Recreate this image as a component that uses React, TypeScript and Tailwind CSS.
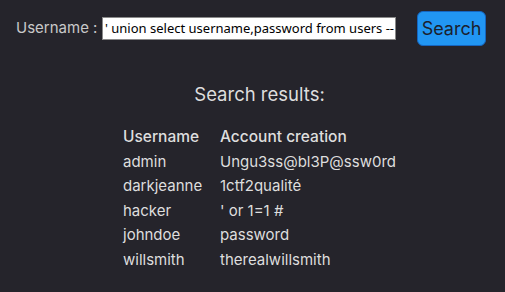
import React from "react";

const rows: [string, string][] = [
  ["admin", "Ungu3ss@bl3P@ssw0rd"],
  ["darkjeanne", "1ctf2qualité"],
  ["hacker", "' or 1=1 #"],
  ["johndoe", "password"],
  ["willsmith", "therealwillsmith"],
];

export default function App() {
  return (
    <div className="w-[505px] h-[292px] bg-[#25242b] text-[#dedede] overflow-hidden" style={{ fontFamily: "Inter, sans-serif" }}>
      <div className="flex items-center pt-[11px] pl-[16px]">
        <span className="text-[15px] w-[86px] shrink-0 text-[#c9c9c9] whitespace-nowrap">Username :</span>
        <div className="w-[294px] h-[23px] bg-white border border-[#8a8a8a] flex items-center overflow-hidden shrink-0">
          <span className="pl-[2px] whitespace-nowrap text-[13px] text-black" style={{ fontFamily: "'Noto Sans', sans-serif" }}>
            ' union select username,password from users -- -
          </span>
        </div>
        <button className="ml-[21px] w-[69px] h-[35px] shrink-0 rounded-[6px] bg-[#2196f3] border border-[#1565c0] text-[18px] text-[#1b1f2e] flex items-center justify-center">
          Search
        </button>
      </div>
      <div className="mt-[35px] pl-[14px] text-center text-[18.5px] leading-[26px] text-[#dedede]">Search results:</div>
      <div className="mt-[18px] ml-[123px] grid grid-cols-[97px_auto] text-[15px] leading-[24.5px]">
        <div className="font-medium text-[15.5px]">Username</div>
        <div className="font-medium text-[15.5px]">Account creation</div>
        {rows.map(([u, p]) => (
          <React.Fragment key={u}>
            <div>{u}</div>
            <div>{p}</div>
          </React.Fragment>
        ))}
      </div>
    </div>
  );
}
